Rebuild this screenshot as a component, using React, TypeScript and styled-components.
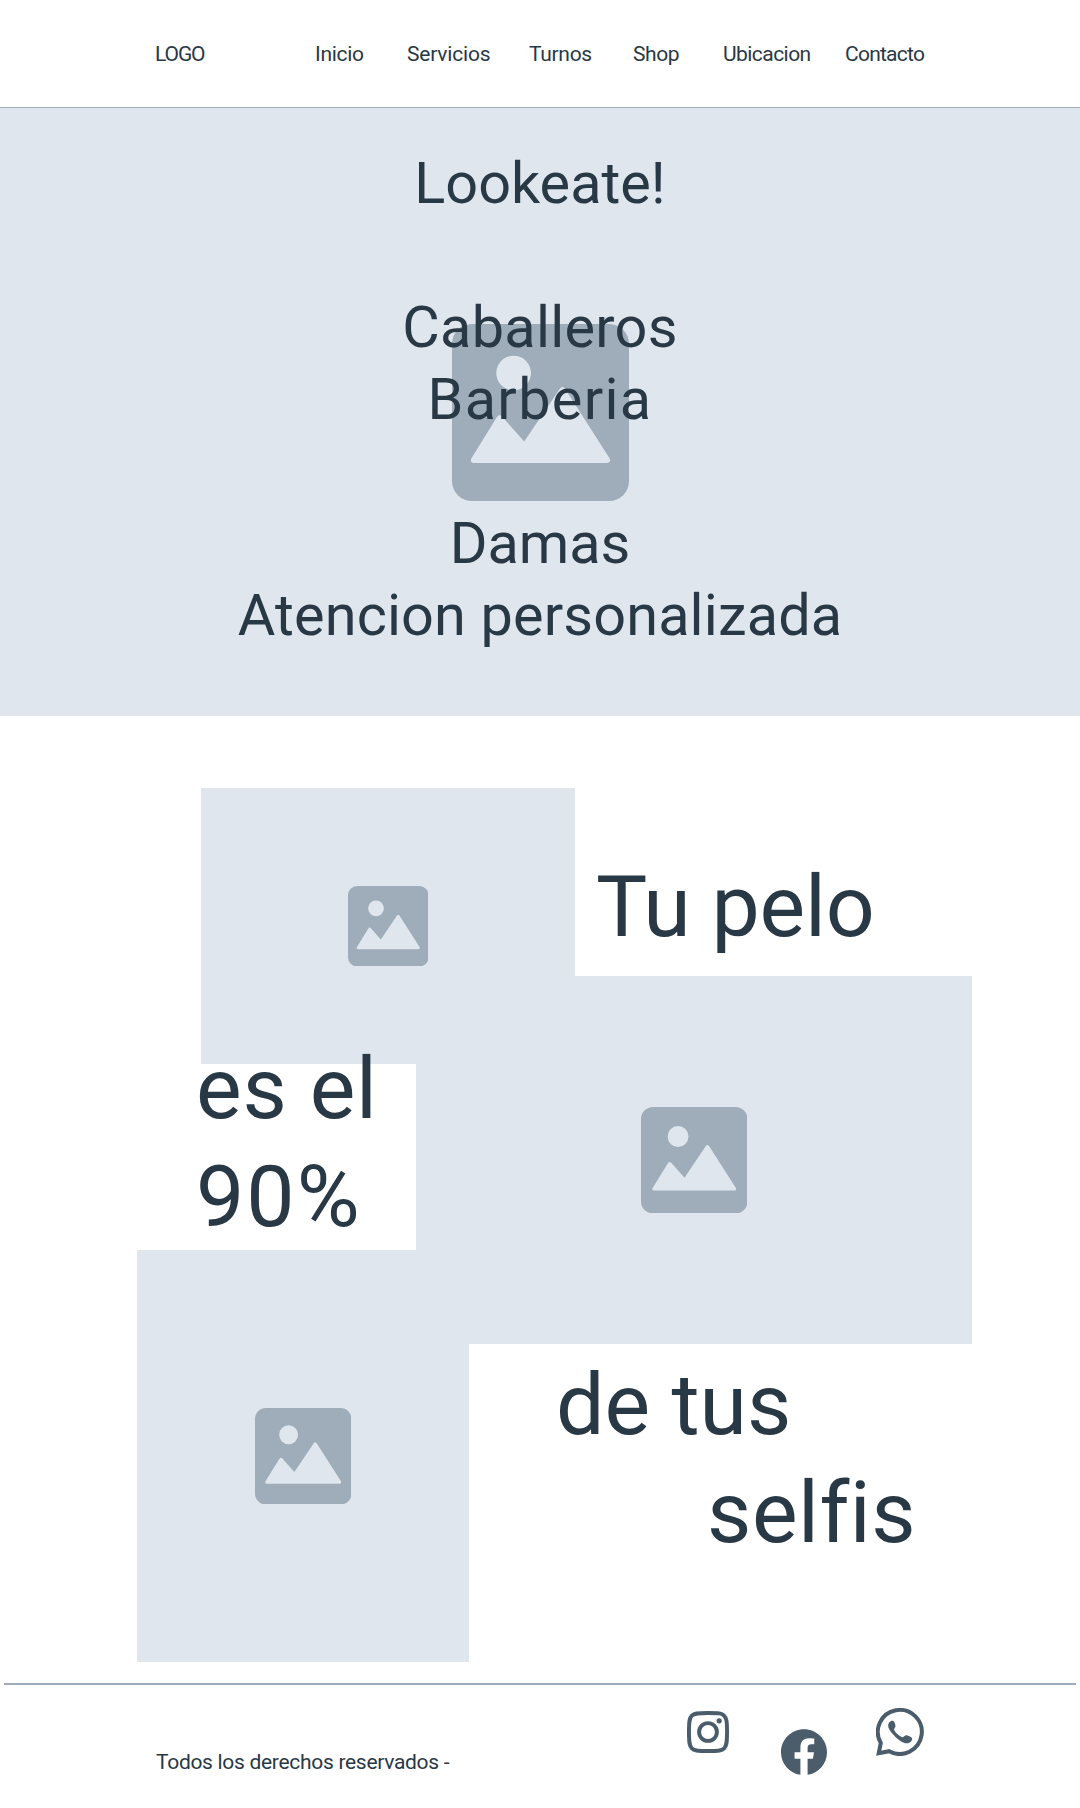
import React from 'react';
import styled, { createGlobalStyle } from 'styled-components';

const color = {
  ink: '#293845',
  panel: '#dfe6ed',
  shape: '#9eadb9',
  social: '#4b5c6b',
};

const GlobalStyle = createGlobalStyle`
  *, *::before, *::after { box-sizing: border-box; }
  body {
    margin: 0;
    background: #fff;
    color: ${color.ink};
    font-family: Roboto, "Liberation Sans", sans-serif;
    font-variant-ligatures: none;
  }
`;

const Page = styled.div`
  width: 1080px;
  height: 1808px;
  display: flex;
  flex-direction: column;
  overflow: hidden;
`;

const Header = styled.header`
  height: 108px;
  padding-left: 155px;
  border-bottom: 1px solid ${color.shape};
  display: grid;
  grid-template-columns: 160px 1fr;
  align-items: center;
  font-size: 21px;
  line-height: 24px;
`;

const Logo = styled.span`
  letter-spacing: -1.1px;
`;

const Nav = styled.nav`
  display: grid;
  grid-template-columns: 92px 122px 104px 90px 122px auto;
`;

const NavLink = styled.a<{ $spacing: number }>`
  letter-spacing: ${(p) => p.$spacing}px;
`;

const Hero = styled.section`
  position: relative;
  height: 608px;
  padding-top: 40px;
  background: ${color.panel};
`;

const HeroImage = styled.div`
  position: absolute;
  inset: 0;
  display: flex;
  align-items: center;
  justify-content: center;
`;

const HeroText = styled.div`
  position: relative;
  text-align: center;
  font-size: 57.6px;
  line-height: 72px;
`;

const HeroLine = styled.div<{ $spacing?: number }>`
  height: 72px;
  letter-spacing: ${(p) => p.$spacing ?? 0}px;
`;

const Collage = styled.section`
  margin: 72px 0 0 137px;
  display: grid;
  grid-template-columns: 64px 215px 53px 106px 397px;
  grid-template-rows: 188px 88px 186px 94px 318px;
`;

const Picture = styled.div<{ $area: string }>`
  grid-area: ${(p) => p.$area};
  background: ${color.panel};
  display: flex;
  align-items: center;
  justify-content: center;
`;

const Phrase = styled.div<{ $area: string; $top: number; $left: number }>`
  grid-area: ${(p) => p.$area};
  z-index: 1;
  margin-top: ${(p) => p.$top}px;
  margin-left: ${(p) => p.$left}px;
  font-size: 86px;
  line-height: 108px;
  white-space: nowrap;
`;

const PhraseLine = styled.div<{ $spacing?: number; $indent?: number }>`
  letter-spacing: ${(p) => p.$spacing ?? 0}px;
  padding-left: ${(p) => p.$indent ?? 0}px;
`;

const Footer = styled.footer`
  flex: 1;
  margin: 21px 4px 0;
  padding: 23px 152px 0;
  border-top: 2px solid ${color.shape};
  display: flex;
  justify-content: space-between;
  align-items: flex-start;
`;

const Copyright = styled.p`
  margin: 42px 0 0;
  font-size: 21px;
  line-height: 24px;
  letter-spacing: -0.3px;
`;

const Social = styled.div`
  display: flex;
  align-items: flex-start;
`;

const SocialLink = styled.a<{ $top: number; $gap: number }>`
  display: block;
  margin-top: ${(p) => p.$top}px;
  margin-right: ${(p) => p.$gap}px;
  color: ${color.social};

  svg { display: block; }
`;

function ImageGlyph({ size }: { size: number }) {
  return (
    <svg width={size} height={size} viewBox="0 0 100 100">
      <rect width="100" height="100" rx="11.3" fill={color.shape} />
      <circle cx="34.8" cy="27.7" r="9.8" fill={color.panel} />
      <path
        fill={color.panel}
        d="M10.9 76 L25.3 52.7 Q26.7 50.6 28.4 52.4 L40.8 66.4 L60.9 36.6 Q62.4 34.6 63.9 36.6 L89.1 76 Q89.9 78.3 87.6 78.5 H12.4 Q10 78.3 10.9 76 Z"
      />
    </svg>
  );
}

function Instagram() {
  return (
    <svg width="42" height="42" viewBox="0 0 42 42" fill="none" stroke="currentColor" strokeWidth="3.9">
      <path d="M21 1.95C32 1.95 35 2.3 37 4.6C39.5 7 40.05 10 40.05 21C40.05 32 39.5 35 37.2 37.3C35 39.5 32 40.05 21 40.05C10 40.05 7 39.5 4.8 37.3C2.5 35 1.95 32 1.95 21C1.95 10 2.5 7 4.8 4.7C7 2.5 10 1.95 21 1.95Z" />
      <circle cx="21" cy="21" r="8.9" />
      <circle cx="32.2" cy="9.8" r="2.6" fill="currentColor" stroke="none" />
    </svg>
  );
}

function Facebook() {
  return (
    <svg width="46" height="46" viewBox="0 0 24 24" fill="currentColor">
      <path d="M24 12.073c0-6.627-5.373-12-12-12s-12 5.373-12 12c0 5.99 4.388 10.954 10.125 11.854v-8.385H7.078v-3.47h3.047V9.43c0-3.007 1.792-4.669 4.533-4.669 1.312 0 2.686.235 2.686.235v2.953H15.83c-1.491 0-1.956.925-1.956 1.874v2.25h3.328l-.532 3.47h-2.796v8.385C19.612 23.027 24 18.062 24 12.073z" />
    </svg>
  );
}

function Whatsapp() {
  return (
    <svg width="48" height="48" viewBox="0 0 48 48">
      <path
        fill="none"
        stroke="currentColor"
        strokeWidth="4"
        d="M4.8 35A22 22 0 1 1 13.2 43.2L2.7 45.3Z"
      />
      <path
        fill="currentColor"
        d="M16.4 12.8C17.8 12.7 18.3 13.8 18.8 15.2C19.4 17 19.8 18 19.3 19C18.8 20.1 17.7 20.7 18.2 22C19.7 25 22.5 27.6 26 29.2C27.5 29.8 28.6 27.4 30.2 27.3C31.5 27.3 35.7 29.3 36.1 30.2C36.5 32.5 34.3 35.2 31 35.3C28 35.4 23 32.4 19 28.4C15.5 25 12.4 21 12.2 18C12.1 15.2 14 12.8 16.4 12.8Z"
      />
    </svg>
  );
}

const links = [
  { label: 'Inicio', spacing: -0.3 },
  { label: 'Servicios', spacing: -0.2 },
  { label: 'Turnos', spacing: -0.3 },
  { label: 'Shop', spacing: -0.4 },
  { label: 'Ubicacion', spacing: -0.55 },
  { label: 'Contacto', spacing: -0.75 },
];

export default function App() {
  return (
    <Page>
      <GlobalStyle />
      <Header>
        <Logo>LOGO</Logo>
        <Nav>
          {links.map((link) => (
            <NavLink key={link.label} $spacing={link.spacing}>{link.label}</NavLink>
          ))}
        </Nav>
      </Header>

      <Hero>
        <HeroImage><ImageGlyph size={177} /></HeroImage>
        <HeroText>
          <HeroLine>Lookeate!</HeroLine>
          <HeroLine />
          <HeroLine $spacing={0.3}>Caballeros</HeroLine>
          <HeroLine $spacing={1.3}>Barberia</HeroLine>
          <HeroLine />
          <HeroLine>Damas</HeroLine>
          <HeroLine $spacing={0.15}>Atencion personalizada</HeroLine>
        </HeroText>
      </Hero>

      <Collage>
        <Picture $area="1 / 2 / 3 / 5"><ImageGlyph size={80.5} /></Picture>
        <Picture $area="2 / 3 / 5 / 6"><ImageGlyph size={106.5} /></Picture>
        <Picture $area="4 / 1 / 6 / 4"><ImageGlyph size={96.5} /></Picture>
        <Phrase $area="1 / 5 / 2 / 6" $top={65} $left={21}>
          <PhraseLine $spacing={-0.2}>Tu pelo</PhraseLine>
        </Phrase>
        <Phrase $area="3 / 2 / 4 / 3" $top={-29} $left={-5}>
          <PhraseLine $spacing={0.8}>es el</PhraseLine>
          <PhraseLine $spacing={2}>90%</PhraseLine>
        </Phrase>
        <Phrase $area="5 / 4 / 6 / 6" $top={7} $left={87}>
          <PhraseLine>de tus</PhraseLine>
          <PhraseLine $spacing={0.5} $indent={151}>selfis</PhraseLine>
        </Phrase>
      </Collage>

      <Footer>
        <Copyright>Todos los derechos reservados -</Copyright>
        <Social>
          <SocialLink $top={3} $gap={52} aria-label="Instagram"><Instagram /></SocialLink>
          <SocialLink $top={21} $gap={49} aria-label="Facebook"><Facebook /></SocialLink>
          <SocialLink $top={0} $gap={0} aria-label="WhatsApp"><Whatsapp /></SocialLink>
        </Social>
      </Footer>
    </Page>
  );
}
